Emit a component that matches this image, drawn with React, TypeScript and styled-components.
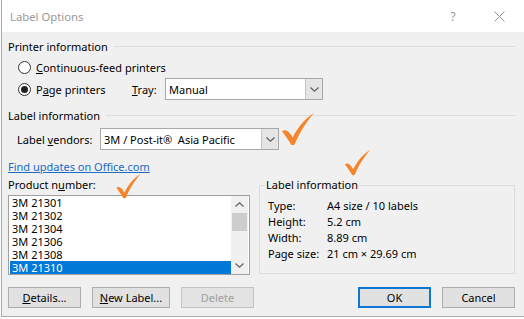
import React from "react";
import styled, { createGlobalStyle } from "styled-components";

const GlobalStyle = createGlobalStyle`
  html, body {
    margin: 0;
    padding: 0;
    background: #ffffff;
  }
  body {
    font-family: "Noto Sans", "Open Sans", sans-serif;
    font-size: 11px;
    color: #000;
  }
`;

const Dialog = styled.div`
  position: relative;
  width: 522px;
  margin-left: 1px;
  border-left: 1px solid #a9a9a9;
  border-bottom: 1px solid #a9a9a9;
`;

const TitleBar = styled.div`
  height: 32px;
  display: flex;
  align-items: center;
  padding: 0 2px 0 8px;
  background: #ffffff;
  color: #9a9a9a;
  font-size: 11.3px;
`;

const Title = styled.span`
  flex: 1;
`;

const TitleButton = styled.span`
  width: 46px;
  display: flex;
  justify-content: center;
  align-items: center;
  color: #9a9a9a;
  font-size: 12px;
`;

const Body = styled.div`
  background: #f0f0f0;
  padding: 6px 9px 8px 6px;
`;

const SectionHead = styled.div<{ $top?: number }>`
  display: flex;
  align-items: center;
  height: 16px;
  margin-top: ${(p) => p.$top ?? 0}px;
  gap: 6px;
  &::after {
    content: "";
    flex: 1;
    height: 1px;
    background: #dcdcdc;
  }
`;

const Row = styled.div<{ $top: number; $h: number; $indent: number }>`
  display: flex;
  align-items: center;
  height: ${(p) => p.$h}px;
  margin-top: ${(p) => p.$top}px;
  padding-left: ${(p) => p.$indent}px;
`;

const Option = styled.label<{ $w?: number }>`
  display: flex;
  align-items: center;
  gap: 5px;
  width: ${(p) => (p.$w ? `${p.$w}px` : "auto")};
`;

const RadioDot = styled.span<{ $checked?: boolean }>`
  width: 13px;
  height: 13px;
  box-sizing: border-box;
  border-radius: 50%;
  border: 1px solid #333;
  background: #fff;
  display: flex;
  align-items: center;
  justify-content: center;
  &::after {
    content: "";
    width: 7px;
    height: 7px;
    border-radius: 50%;
    background: ${(p) => (p.$checked ? "#222" : "transparent")};
  }
`;

const FieldLabel = styled.span<{ $w: number }>`
  width: ${(p) => p.$w}px;
`;

const Combo = styled.div<{ $w: number }>`
  width: ${(p) => p.$w}px;
  height: 22px;
  box-sizing: border-box;
  border: 1px solid #a8a8a8;
  background: #fff;
  display: flex;
  align-items: center;
`;

const ComboText = styled.span`
  flex: 1;
  padding-left: 3px;
  white-space: pre;
`;

const ComboButton = styled.span`
  width: 17px;
  height: 100%;
  box-sizing: border-box;
  background: #e5e5e5;
  border-left: 1px solid #c6c6c6;
  display: flex;
  align-items: center;
  justify-content: center;
`;

const LinkText = styled.a`
  display: block;
  height: 16px;
  line-height: 16px;
  margin-top: 9px;
  color: #1a6bc6;
  text-decoration: underline;
`;

const Lower = styled.div`
  display: flex;
  margin-top: 2px;
`;

const LeftCol = styled.div`
  width: 242px;
  display: flex;
  flex-direction: column;
`;

const Caption = styled.div`
  height: 16px;
  line-height: 16px;
`;

const ListBox = styled.div`
  margin-top: 2px;
  width: 242px;
  height: 80px;
  box-sizing: border-box;
  border: 1px solid #a0a0a0;
  background: #fff;
  display: flex;
  padding: 0 1px;
`;

const ListItems = styled.div`
  flex: 1;
  display: flex;
  flex-direction: column;
`;

const ListItem = styled.div<{ $selected?: boolean }>`
  height: 13px;
  line-height: 13px;
  padding-left: 2px;
  background: ${(p) => (p.$selected ? "#0078d7" : "transparent")};
  color: ${(p) => (p.$selected ? "#fff" : "#000")};
`;

const ScrollBar = styled.div`
  width: 17px;
  background: #f0f0f0;
  display: flex;
  flex-direction: column;
  align-items: center;
`;

const ScrollArrow = styled.div`
  height: 17px;
  width: 100%;
  display: flex;
  align-items: center;
  justify-content: center;
`;

const ScrollThumb = styled.div`
  width: 15px;
  height: 18px;
  background: #cdcdcd;
`;

const ScrollTrack = styled.div`
  flex: 1;
`;

const GroupBox = styled.fieldset`
  margin: 0 0 0 9px;
  width: 256px;
  height: 97px;
  box-sizing: border-box;
  border: 1px solid #dcdcdc;
  padding: 0 0 0 5px;
  min-width: 0;
`;

const Legend = styled.legend`
  padding: 0 1px;
  line-height: 16px;
`;

const InfoGrid = styled.div`
  display: grid;
  grid-template-columns: 59px auto;
  grid-auto-rows: 16px;
  align-items: center;
  padding-left: 3px;
  margin-top: 4px;
`;

const ButtonRow = styled.div`
  display: flex;
  margin-top: 12px;
  gap: 11px;
`;

const Spacer = styled.div`
  flex: 1;
`;

const Button = styled.button<{ $w: number; $default?: boolean }>`
  width: ${(p) => p.$w}px;
  height: 21px;
  box-sizing: border-box;
  padding: 0;
  font-family: inherit;
  font-size: 11px;
  color: #000;
  background: #e1e1e1;
  border: ${(p) => (p.$default ? "2px solid #0a78d4" : "1px solid #adadad")};
  &:disabled {
    color: #a0a0a0;
    background: #e3e3e3;
    border-color: #c4c4c4;
  }
`;

const Mark = styled.svg<{ $x: number; $y: number }>`
  position: absolute;
  left: ${(p) => p.$x}px;
  top: ${(p) => p.$y}px;
`;

const Chevron = ({ up }: { up?: boolean }) => (
  <svg width="9" height="5" viewBox="0 0 9 5">
    <path
      d={up ? "M0.5 4.5 L4.5 0.8 L8.5 4.5" : "M0.5 0.5 L4.5 4.2 L8.5 0.5"}
      fill="none"
      stroke="#606060"
      strokeWidth="1.2"
    />
  </svg>
);

const Check = ({ x, y, w, h }: { x: number; y: number; w: number; h: number }) => (
  <Mark $x={x} $y={y} width={w} height={h} viewBox="0 0 32 32">
    <path
      d="M1 18 C4 16 7 18 9 21 L11 24 C16 14 23 6 31 1 C25 8 18 18 13 30 C12 31.5 10 31.5 9 30 C7 26 4 22 1 18 Z"
      fill="#f5842b"
    />
  </Mark>
);

const products = ["3M 21301", "3M 21302", "3M 21304", "3M 21306", "3M 21308", "3M 21310"];

const info = [
  ["Type:", "A4 size / 10 labels"],
  ["Height:", "5.2 cm"],
  ["Width:", "8.89 cm"],
  ["Page size:", "21 cm × 29.69 cm"],
];

export default function App() {
  return (
    <>
      <GlobalStyle />
      <Dialog>
        <TitleBar>
          <Title>Label Options</Title>
          <TitleButton>?</TitleButton>
          <TitleButton>
            <svg width="11" height="11" viewBox="0 0 11 11">
              <path d="M0.5 0.5 L10.5 10.5 M10.5 0.5 L0.5 10.5" stroke="#8f8f8f" strokeWidth="1" />
            </svg>
          </TitleButton>
        </TitleBar>
        <Body>
          <SectionHead>Printer information</SectionHead>
          <Row $top={5} $h={16} $indent={10}>
            <Option>
              <RadioDot />
              <span>
                <u>C</u>ontinuous-feed printers
              </span>
            </Option>
          </Row>
          <Row $top={3} $h={22} $indent={10}>
            <Option $w={114}>
              <RadioDot $checked />
              <span>
                P<u>a</u>ge printers
              </span>
            </Option>
            <FieldLabel $w={33}>
              <u>T</u>ray:
            </FieldLabel>
            <Combo $w={158}>
              <ComboText>Manual</ComboText>
              <ComboButton>
                <Chevron />
              </ComboButton>
            </Combo>
          </Row>
          <SectionHead $top={7}>Label information</SectionHead>
          <Row $top={5} $h={22} $indent={9}>
            <FieldLabel $w={83}>
              Label <u>v</u>endors:
            </FieldLabel>
            <Combo $w={179}>
              <ComboText>3M / Post-it®  Asia Pacific</ComboText>
              <ComboButton>
                <Chevron />
              </ComboButton>
            </Combo>
          </Row>
          <LinkText>Find updates on Office.com</LinkText>
          <Lower>
            <LeftCol>
              <Caption>
                Product n<u>u</u>mber:
              </Caption>
              <ListBox>
                <ListItems>
                  {products.map((p, i) => (
                    <ListItem key={p} $selected={i === products.length - 1}>
                      {p}
                    </ListItem>
                  ))}
                </ListItems>
                <ScrollBar>
                  <ScrollArrow>
                    <Chevron up />
                  </ScrollArrow>
                  <ScrollThumb />
                  <ScrollTrack />
                  <ScrollArrow>
                    <Chevron />
                  </ScrollArrow>
                </ScrollBar>
              </ListBox>
            </LeftCol>
            <GroupBox>
              <Legend>Label information</Legend>
              <InfoGrid>
                {info.map(([k, v]) => (
                  <React.Fragment key={k}>
                    <span>{k}</span>
                    <span>{v}</span>
                  </React.Fragment>
                ))}
              </InfoGrid>
            </GroupBox>
          </Lower>
          <ButtonRow>
            <Button $w={73}>
              <u>D</u>etails...
            </Button>
            <Button $w={78}>
              <u>N</u>ew Label...
            </Button>
            <Button $w={73} disabled>
              Delete
            </Button>
            <Spacer />
            <Button $w={73} $default>
              OK
            </Button>
            <Button $w={73}>Cancel</Button>
          </ButtonRow>
        </Body>
        <Check x={279} y={112} w={34} h={34} />
        <Check x={113} y={173} w={27} h={26} />
        <Check x={342} y={147} w={27} h={31} />
      </Dialog>
    </>
  );
}
